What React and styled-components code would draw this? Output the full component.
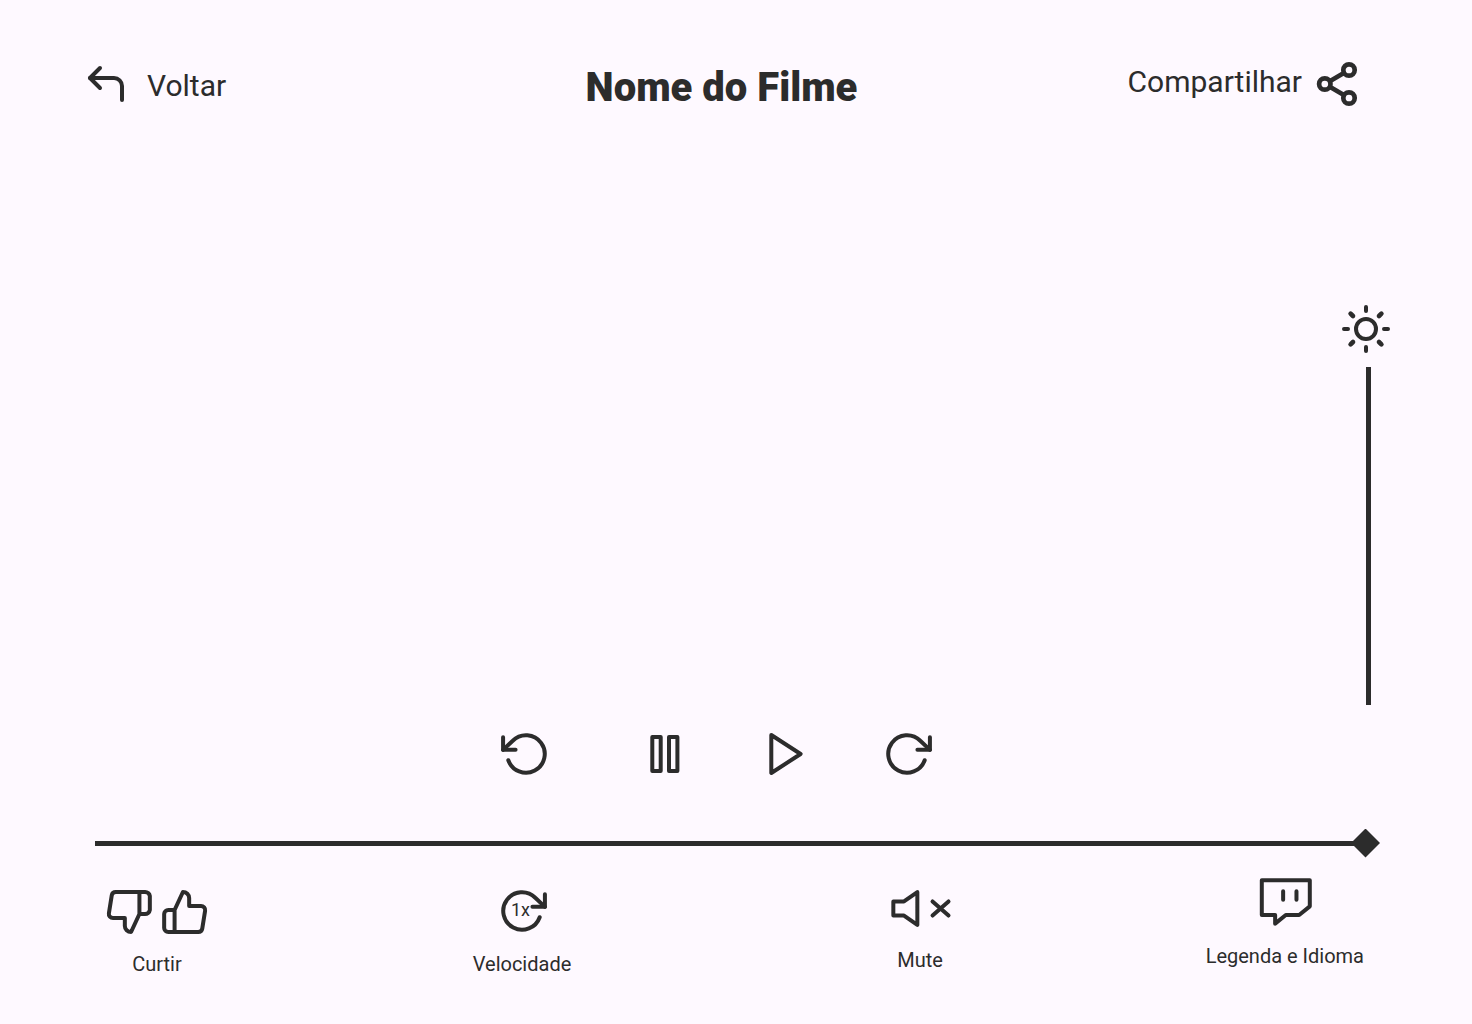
import React, { useState } from "react";
import styled, { createGlobalStyle } from "styled-components";

const ink = "#2c2c2c";
const paper = "#fef9ff";

const GlobalStyle = createGlobalStyle`
  *, *::before, *::after { box-sizing: border-box; }
  body {
    margin: 0;
    background: ${paper};
    color: ${ink};
    font-family: Roboto, "Liberation Sans", sans-serif;
  }
`;

const Page = styled.main`
  display: flex;
  flex-direction: column;
  min-height: 100vh;
  padding: 60px 82px 48px;
`;

const Header = styled.header`
  display: grid;
  grid-template-columns: 1fr auto 1fr;
  align-items: start;
  padding-right: 29px;
`;

const Title = styled.h1`
  margin: 0;
  font-size: 40px;
  font-weight: 900;
  line-height: 56px;
`;

const NavLink = styled.a`
  display: flex;
  align-items: center;
  justify-self: ${(p) => p.$side};
  gap: ${(p) => (p.$side === "start" ? 17 : 11)}px;
  color: inherit;
  text-decoration: none;
`;

const NavText = styled.span`
  padding: ${(p) => (p.$low ? "4px 0 0" : "0 0 4px")};
  font-size: 30px;
  line-height: 36px;
`;

const Svg = styled.svg`
  display: block;
  flex: none;
  fill: none;
  stroke: currentColor;
  stroke-width: ${(p) => p.$stroke}px;
  stroke-linecap: round;
  stroke-linejoin: round;
  overflow: visible;

  * { vector-effect: non-scaling-stroke; }
`;

const Stage = styled.section`
  display: flex;
  flex: 1;
  align-items: flex-end;
  justify-content: flex-end;
`;

const Brightness = styled.label`
  display: flex;
  flex-direction: column;
`;

const BrightnessRange = styled.input`
  appearance: none;
  writing-mode: vertical-lr;
  direction: rtl;
  width: 5px;
  height: 338px;
  margin: 14px 0 0 24px;
  background: ${ink};
  cursor: pointer;

  &::-webkit-slider-thumb {
    appearance: none;
    width: 5px;
    height: 5px;
    background: ${ink};
  }
`;

const IconButton = styled.button`
  display: block;
  padding: 0;
  border: 0;
  background: none;
  color: inherit;
  cursor: pointer;
`;

const Playback = styled.div`
  display: flex;
  justify-content: center;
  gap: 71px;
  margin-top: 24px;
  padding-right: 39px;
`;

const SkipBack = styled(IconButton)`
  margin-right: 18px;
`;

const Seek = styled.div`
  display: flex;
  margin-top: 49px;
  padding: 0 10px 0 13px;
`;

const SeekRange = styled.input`
  appearance: none;
  flex: 1;
  height: 30px;
  margin: 0;
  background: none;
  cursor: pointer;

  &::-webkit-slider-runnable-track {
    height: 5px;
    background: linear-gradient(${ink}, ${ink}) left / calc(100% - 14px) 100% no-repeat;
  }

  &::-webkit-slider-thumb {
    appearance: none;
    width: 29px;
    height: 29px;
    margin-top: -12px;
    background: ${ink};
    clip-path: polygon(50% 0, 100% 50%, 50% 100%, 0 50%);
  }
`;

const Actions = styled.div`
  display: grid;
  grid-template-columns: 219fr 398fr 398fr 245fr;
  align-items: end;
  margin-top: 18px;
  padding: 0 26px 0 22px;
`;

const Action = styled.div`
  display: flex;
  flex-direction: column;
  align-items: center;
  justify-self: ${(p) => p.$place || "center"};
  gap: 16px;
  padding-bottom: ${(p) => p.$lift || 0}px;
  font-size: 20px;
  line-height: 24px;
`;

const ActionButton = styled(Action).attrs({ as: "button", type: "button" })`
  padding-top: 0;
  padding-inline: 0;
  border: 0;
  background: none;
  color: inherit;
  font-family: inherit;
  cursor: pointer;
`;

const Votes = styled.div`
  display: flex;
  gap: 6px;
`;

const SpeedIcon = styled.span`
  display: grid;
  place-items: center;

  > * { grid-area: 1 / 1; }
`;

const SpeedValue = styled.span`
  padding: 0 3px 2px 0;
  font-size: 18px;
  line-height: 20px;
`;

function Icon({ width = 50, height = 50, viewBox = "0 0 24 24", stroke = 4, children }) {
  return (
    <Svg
      width={width}
      height={height}
      viewBox={viewBox}
      $stroke={stroke}
      preserveAspectRatio="none"
      aria-hidden="true"
    >
      {children}
    </Svg>
  );
}

function RotateRight() {
  return (
    <Icon>
      <path d="M23 4v6h-6" />
      <path d="M20.49 15a9 9 0 1 1-2.12-9.36L23 10" />
    </Icon>
  );
}

export default function App() {
  const [brightness, setBrightness] = useState(100);
  const [position, setPosition] = useState(100);

  return (
    <>
      <GlobalStyle />
      <Page>
        <Header>
          <NavLink href="#voltar" $side="start">
            <Icon width={48} height={48}>
              <path d="M9 14 4 9l5-5" />
              <path d="M20 20v-7a4 4 0 0 0-4-4H4" />
            </Icon>
            <NavText $low>Voltar</NavText>
          </NavLink>
          <Title>Nome do Filme</Title>
          <NavLink href="#compartilhar" $side="end">
            <NavText>Compartilhar</NavText>
            <Icon width={48} height={48} stroke={4.7}>
              <circle cx="18" cy="5" r="2.85" />
              <circle cx="5.9" cy="12" r="2.85" />
              <circle cx="18" cy="19" r="2.85" />
              <path d="m8.59 13.51 6.83 3.98M15.41 6.51l-6.82 3.98" />
            </Icon>
          </NavLink>
        </Header>

        <Stage>
          <Brightness>
            <Icon width={48} height={48}>
              <circle cx="12" cy="12" r="5" />
              <path d="M12 1v2M12 21v2M1 12h2M21 12h2" />
              <path
                strokeWidth="4.6"
                d="M4.3 4.3l1.2 1.2M18.5 18.5l1.2 1.2M4.3 19.7l1.2-1.2M18.5 5.5l1.2-1.2"
              />
            </Icon>
            <BrightnessRange
              type="range"
              aria-label="Brilho"
              value={brightness}
              onChange={(e) => setBrightness(e.target.value)}
            />
          </Brightness>
        </Stage>

        <Playback>
          <SkipBack type="button" aria-label="Retroceder">
            <Icon>
              <path d="M1 4v6h6" />
              <path d="M3.51 15a9 9 0 1 0 2.13-9.36L1 10" />
            </Icon>
          </SkipBack>
          <IconButton type="button" aria-label="Pausar">
            <Icon viewBox="0 0 50 50">
              <path d="M12.3 8h8.4v34h-8.4zM29 8h8.4v34H29z" />
            </Icon>
          </IconButton>
          <IconButton type="button" aria-label="Reproduzir">
            <Icon viewBox="0 0 50 50">
              <path d="M10.3 6 39.6 25 10.3 44z" />
            </Icon>
          </IconButton>
          <IconButton type="button" aria-label="Avançar">
            <RotateRight />
          </IconButton>
        </Playback>

        <Seek>
          <SeekRange
            type="range"
            aria-label="Progresso"
            value={position}
            onChange={(e) => setPosition(e.target.value)}
          />
        </Seek>

        <Actions>
          <Action $place="start">
            <Votes>
              <IconButton type="button" aria-label="Não curtir">
                <Icon height={48}>
                  <path d="M10 15v4a3 3 0 0 0 3 3l4-9V2H5.72a2 2 0 0 0-2 1.7l-1.38 9a2 2 0 0 0 2 2.3zM17 2h2.67A2.31 2.31 0 0 1 22 4v7a2.31 2.31 0 0 1-2.33 2H17" />
                </Icon>
              </IconButton>
              <IconButton type="button" aria-label="Curtir">
                <Icon height={48}>
                  <path d="M14 9V5a3 3 0 0 0-3-3l-4 9v11h11.28a2 2 0 0 0 2-1.7l1.38-9a2 2 0 0 0-2-2.3zM7 22H4a2 2 0 0 1-2-2v-7a2 2 0 0 1 2-2h3" />
                </Icon>
              </IconButton>
            </Votes>
            <span>Curtir</span>
          </Action>
          <ActionButton>
            <SpeedIcon>
              <RotateRight />
              <SpeedValue>1x</SpeedValue>
            </SpeedIcon>
            <span>Velocidade</span>
          </ActionButton>
          <ActionButton $lift={4}>
            <Icon width={64} height={47} viewBox="0 2 24 20">
              <path d="M11 5 6 9H2v6h4l5 4zM22.7 9l-6 6M16.7 9l6 6" />
            </Icon>
            <span>Mute</span>
          </ActionButton>
          <ActionButton $place="end" $lift={8}>
            <Icon width={64} height={52}>
              <path d="M21.3 2h-18v16h5v4l4-4h5l4-4zM11.3 11V7M16.3 11V7" />
            </Icon>
            <span>Legenda e Idioma</span>
          </ActionButton>
        </Actions>
      </Page>
    </>
  );
}
